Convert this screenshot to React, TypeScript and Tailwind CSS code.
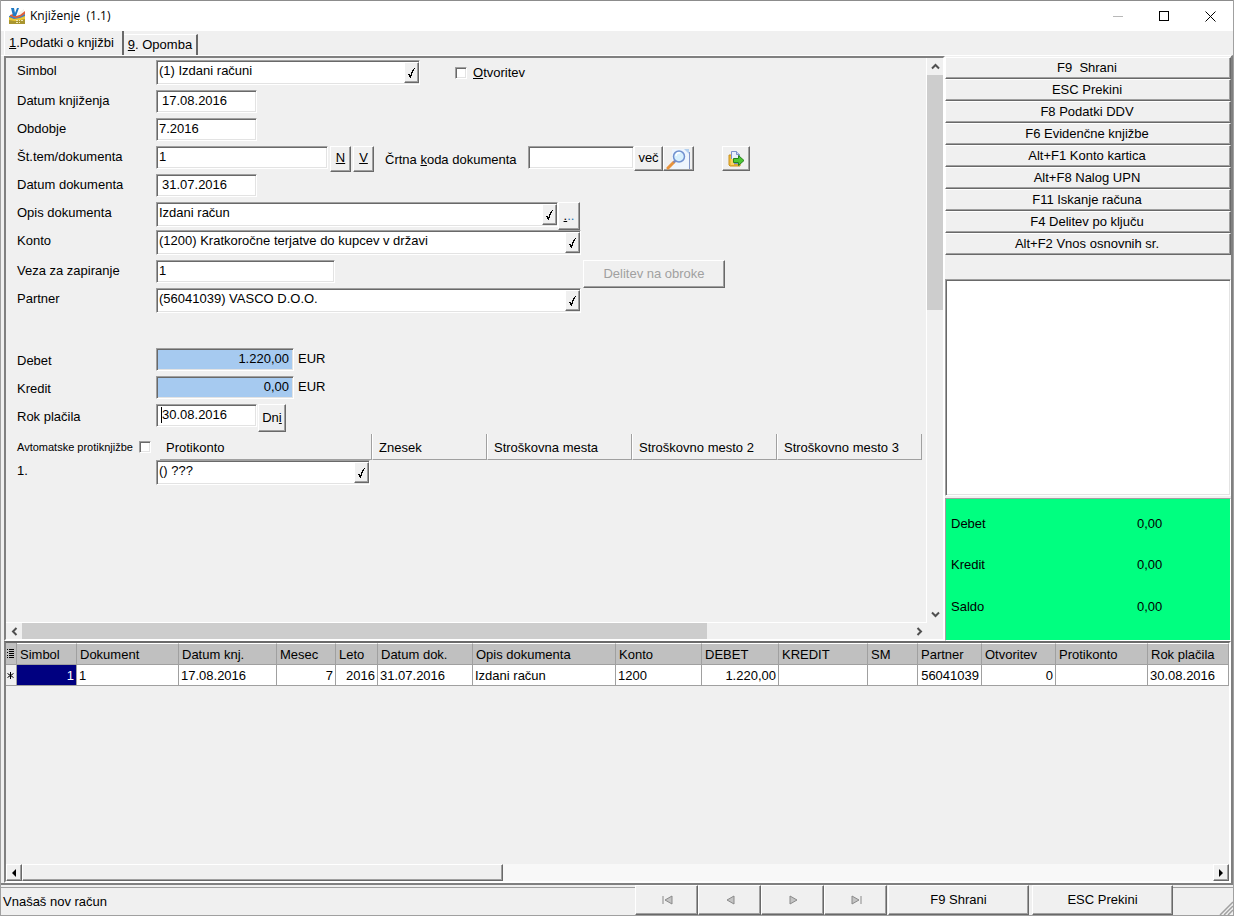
import type { ReactNode } from 'react';
import clsx from 'clsx';

const raised =
	'border border-t-white border-l-white border-r-[#696969] border-b-[#696969] shadow-[inset_-1px_-1px_0_#a0a0a0] bg-[#f0f0f0]';
const sunken =
	'border border-t-[#a0a0a0] border-l-[#a0a0a0] border-r-white border-b-white shadow-[inset_1px_1px_0_#696969,inset_-1px_-1px_0_#e3e3e3] bg-white';

type ButtonProps = {
	children: ReactNode;
	className?: string;
	label?: string;
	disabled?: boolean;
};

const Button = ({ children, className, label, disabled }: ButtonProps) => (
	<button
		type="button"
		aria-label={label}
		disabled={disabled}
		className={clsx(raised, 'flex shrink-0 items-center justify-center', className)}>
		{children}
	</button>
);

const CheckGlyph = () => (
	<svg width="9" height="12" viewBox="0 0 9 12" fill="none" stroke="#000" shapeRendering="crispEdges">
		<path d="M1 7.500h1M2.500 7v3M3.500 8v3M4.500 5v4M5.500 3v3M6.500 2v2M7.500 1v1" />
	</svg>
);

type FieldProps = {
	id: string;
	value: string;
	className?: string;
	indent?: boolean;
};

const Field = ({ id, value, className, indent }: FieldProps) => (
	<input
		id={id}
		defaultValue={value}
		className={clsx(sunken, 'h-[23px] pb-[2px] outline-none', indent ? 'pl-[5px]' : 'pl-[2px]', className)}
	/>
);

// edit box with the lookup button on its right side
const Lookup = ({ id, value, className }: FieldProps) => (
	<div className={clsx(sunken, 'flex h-[25px] shrink-0 py-px pl-px', className)}>
		<input id={id} defaultValue={value} className="min-w-0 flex-1 bg-transparent pb-[3px] pl-px outline-none" />
		<Button label="Izberi" className="w-[15px]">
			<CheckGlyph />
		</Button>
	</div>
);

type RowProps = {
	label: string;
	id: string;
	tall?: boolean;
	low?: boolean;
	children: ReactNode;
};

const Row = ({ label, id, tall, low, children }: RowProps) => (
	<div className={clsx('flex items-start', tall ? 'h-[30px]' : 'h-7')}>
		<label htmlFor={id} className={clsx('w-[139px] shrink-0 leading-[21px]', low && 'pt-[2px]')}>
			{label}
		</label>
		{children}
	</div>
);

const Chevron = ({ d }: { d: string }) => (
	<svg width="9" height="9" viewBox="0 0 9 9" fill="none" stroke="#505050" strokeWidth="2">
		<path d={d} />
	</svg>
);

const Logo = () => (
	<svg width="17" height="16" viewBox="0 0 17 16">
		<path d="M9 5l6-4v6H9z" fill="#f4f4ee" />
		<path d="M0 8l4-1 3 2 4-2 5-1v3l-5 2-5 1-6-2z" fill="#3f7fc0" />
		<path d="M1 7l3-1 3 2 4-1 5-4v3l-5 3-4 1-6-2z" fill="#e0603a" />
		<path d="M0 9l5 2 6-1 5-2v8H0z" fill="#efc832" />
		<path d="M0 12l6 1 10-2v5H0z" fill="#a9952f" />
		<path d="M2 0h3l1 5 2-5h2L7 8H4z" fill="#1f79c4" />
		<path d="M7 12.500h2M10 12.500h1M12 12.500h2M7 14.500h2M10 14.500h1" stroke="#efe6b0" fill="none" />
	</svg>
);

const MagnifierIcon = () => (
	<svg width="26" height="22" viewBox="0 0 26 22">
		<path d="M6 1h13l4 4v16H6z" fill="#eef5fd" />
		<path d="M18 1h5v5z" fill="#b3d0ef" />
		<path d="M23.500 4v17" stroke="#8296c8" />
		<path d="M2 20l6-6" stroke="#e8923a" strokeWidth="3" strokeLinecap="round" />
		<path d="M7.500 14.500l2-2" stroke="#7d86b8" strokeWidth="2" />
		<circle cx="13" cy="8.500" r="5.500" fill="#d8f0fd" stroke="#7191cf" strokeWidth="1.500" />
		<path d="M10 8a3 3 0 0 1 4-3" stroke="#fff" strokeWidth="1.500" fill="none" />
	</svg>
);

const ExportIcon = () => (
	<svg width="17" height="16" viewBox="0 0 17 16">
		<path d="M1 4h3v9h8v2H2l-1-1z" fill="#f2bf3b" stroke="#c8901c" />
		<path d="M3.500.5h5l3 3v9h-8z" fill="#e9effb" stroke="#7e91c9" />
		<path d="M8.500.5v3h3" fill="#c6d4f2" stroke="#7e91c9" />
		<path d="M3 8h3v6H3z" fill="#f7d264" />
		<path d="M5.500 7.500h5v-3l5.500 5-5.500 5v-3h-5z" fill="#4cc832" stroke="#26811c" />
	</svg>
);

const navIcons = [
	{ label: 'Prvi', d: 'M3 3v8M12 3v8l-7-4z' },
	{ label: 'Prejšnji', d: 'M11 3v8l-7-4z' },
	{ label: 'Naslednji', d: 'M4 3v8l7-4z' },
	{ label: 'Zadnji', d: 'M3 3v8l7-4zM12 3v8' },
];

const actions = [
	'F9  Shrani',
	'ESC Prekini',
	'F8 Podatki DDV',
	'F6 Evidenčne knjižbe',
	'Alt+F1 Konto kartica',
	'Alt+F8 Nalog UPN',
	'F11 Iskanje računa',
	'F4 Delitev po ključu',
	'Alt+F2 Vnos osnovnih sr.',
];

const totals = [
	{ name: 'Debet', value: '0,00' },
	{ name: 'Kredit', value: '0,00' },
	{ name: 'Saldo', value: '0,00' },
];

const columns = [
	{ title: 'Simbol', value: '1', width: 'w-[60px]', right: true },
	{ title: 'Dokument', value: '1', width: 'w-[102px]' },
	{ title: 'Datum knj.', value: '17.08.2016', width: 'w-[98px]' },
	{ title: 'Mesec', value: '7', width: 'w-[59px]', right: true },
	{ title: 'Leto', value: '2016', width: 'w-[42px]', right: true },
	{ title: 'Datum dok.', value: '31.07.2016', width: 'w-[95px]' },
	{ title: 'Opis dokumenta', value: 'Izdani račun', width: 'w-[143px]' },
	{ title: 'Konto', value: '1200', width: 'w-[86px]' },
	{ title: 'DEBET', value: '1.220,00', width: 'w-[77px]', right: true },
	{ title: 'KREDIT', value: '', width: 'w-[89px]' },
	{ title: 'SM', value: '', width: 'w-[50px]' },
	{ title: 'Partner', value: '56041039', width: 'w-[64px]', right: true },
	{ title: 'Otvoritev', value: '0', width: 'w-[74px]', right: true },
	{ title: 'Protikonto', value: '', width: 'w-[92px]' },
	{ title: 'Rok plačila', value: '30.08.2016', width: '' },
];

const counterHeads = [
	{ title: 'Znesek', width: 'w-[115px]' },
	{ title: 'Stroškovna mesta', width: 'w-[145px]' },
	{ title: 'Stroškovno mesto 2', width: 'w-[145px]' },
	{ title: 'Stroškovno mesto 3', width: 'w-[145px]' },
];

const headCell = 'flex shrink-0 items-center border-b border-r border-[#a0a0a0] pl-[6px] pt-[3px]';

const TitleBar = () => (
	<header className="flex h-[31px] items-center border-t border-[#8c8c8c] bg-white pl-2">
		<Logo />
		<h1 className="flex-1 whitespace-pre pl-1 font-['Open_Sans',sans-serif] text-[12px]">
			Knjiženje  (1.1)
		</h1>
		<button type="button" aria-label="Pomanjšaj" className="flex w-[46px] justify-center">
			<svg width="10" height="10" stroke="#b8b8b8" shapeRendering="crispEdges">
				<path d="M0 5.500h10" />
			</svg>
		</button>
		<button type="button" aria-label="Povečaj" className="flex w-[46px] justify-center">
			<svg width="10" height="10" fill="none" stroke="#000" shapeRendering="crispEdges">
				<path d="M.5.5h9v9h-9z" />
			</svg>
		</button>
		<button type="button" aria-label="Zapri" className="flex w-[46px] justify-center">
			<svg width="11" height="11" fill="none" stroke="#000">
				<path d="M.5.5l10 10M10.500.5l-10 10" />
			</svg>
		</button>
	</header>
);

const EntryForm = () => (
	<form className="min-w-0 flex-1 overflow-hidden whitespace-nowrap border-b border-r border-white pl-[11px] pt-[2px]">
		<Row label="Simbol" id="simbol" tall>
			<Lookup id="simbol" value="(1) Izdani računi" className="w-[264px]" />
			<div className="flex items-center gap-[6px] pl-[35px] pt-[5px]">
				<input id="otvoritev" type="checkbox" className={clsx(sunken, 'size-3 appearance-none')} />
				<label htmlFor="otvoritev">
					<u>O</u>tvoritev
				</label>
			</div>
		</Row>
		<Row label="Datum knjiženja" id="datumKnj">
			<Field id="datumKnj" value="17.08.2016" className="w-[101px]" indent />
		</Row>
		<Row label="Obdobje" id="obdobje">
			<Field id="obdobje" value="7.2016" className="w-[101px]" />
		</Row>
		<Row label="Št.tem/dokumenta" id="stDok">
			<Field id="stDok" value="1" className="w-[172px]" />
			<Button className="ml-[2px] h-[26px] w-[21px] pb-[2px]">
				<u>N</u>
			</Button>
			<Button className="ml-[2px] h-[26px] w-[21px] pb-[2px]">
				<u>V</u>
			</Button>
			<label htmlFor="koda" className="w-[154px] shrink-0 pl-[11px] leading-7">
				Črtna <u>k</u>oda dokumenta
			</label>
			<Field id="koda" value="" className="w-[106px]" />
			<Button className="h-[25px] w-[29px] pb-[2px]">več</Button>
			<Button label="Poišči" className="h-[25px] w-[31px]">
				<MagnifierIcon />
			</Button>
			<Button label="Odpri" className="ml-7 h-[25px] w-7">
				<ExportIcon />
			</Button>
		</Row>
		<Row label="Datum dokumenta" id="datumDok">
			<Field id="datumDok" value="31.07.2016" className="w-[101px]" indent />
		</Row>
		<Row label="Opis dokumenta" id="opis">
			<Lookup id="opis" value="Izdani račun" className="w-[402px]" />
			<Button label="Več opisov" className="h-7 w-[22px] text-[#1b74b0]">
				<u className="text-black">.</u>..
			</Button>
		</Row>
		<Row label="Konto" id="konto" tall>
			<Lookup id="konto" value="(1200) Kratkoročne terjatve do kupcev v državi" className="w-[425px]" />
		</Row>
		<Row label="Veza za zapiranje" id="veza">
			<Field id="veza" value="1" className="w-[179px]" />
			<Button disabled className="ml-[248px] h-7 w-[142px] pb-px text-[#a0a0a0]">
				Delitev na obroke
			</Button>
		</Row>
		<Row label="Partner" id="partner">
			<Lookup id="partner" value="(56041039) VASCO D.O.O." className="w-[425px]" />
		</Row>
		<div className="pt-8">
			<Row label="Debet" id="debet" low>
				<Field id="debet" value="1.220,00" className="w-[138px] !bg-[#a6caf0] pr-1 text-right" />
				<span className="pl-1 leading-[22px]">EUR</span>
			</Row>
			<Row label="Kredit" id="kredit" low>
				<Field id="kredit" value="0,00" className="w-[138px] !bg-[#a6caf0] pr-1 text-right" />
				<span className="pl-1 leading-[22px]">EUR</span>
			</Row>
			<Row label="Rok plačila" id="rok" low>
				<div className={clsx(sunken, 'flex h-[23px] w-[101px] items-center pb-[2px] pl-1')}>
					<span className="h-4 w-px bg-black" />
					<input id="rok" defaultValue="30.08.2016" className="min-w-0 flex-1 bg-transparent outline-none" />
				</div>
				<Button className="ml-px h-7 w-[28px]">
					<span>
						Dn<u>i</u>
					</span>
				</Button>
			</Row>
		</div>
		<div className="flex h-7 pt-[2px]">
			<div className="flex w-[143px] shrink-0 items-center gap-2 text-[11px]">
				<label htmlFor="avto" className="w-[114px]">
					Avtomatske protiknjižbe
				</label>
				<input id="avto" type="checkbox" className={clsx(sunken, 'size-3 appearance-none')} />
			</div>
			<div className={clsx(headCell, 'w-[212px]')}>Protikonto</div>
			{counterHeads.map((head) => (
				<div key={head.title} className={clsx(headCell, 'border-l border-l-white', head.width)}>
					{head.title}
				</div>
			))}
		</div>
		<Row label="1." id="protikonto">
			<Lookup id="protikonto" value="() ???" className="w-[214px]" />
		</Row>
	</form>
);

const FormPane = () => (
	<section className="flex min-w-0 flex-1 flex-col border-2 border-b-white border-l-[#808080] border-r-white border-t-[#808080]">
		<div className="flex min-h-0 flex-1">
			<EntryForm />
			<div className="flex w-4 flex-col">
				<div className="flex h-[17px] items-center justify-center">
					<Chevron d="M1 6.500l3.500-3.500L8 6.500" />
				</div>
				<div className="h-[235px] bg-[#cdcdcd]" />
				<div className="flex-1" />
				<div className="flex h-[17px] items-center justify-center">
					<Chevron d="M1 2.500L4.500 6 8 2.500" />
				</div>
			</div>
		</div>
		<div className="flex h-4 pr-4">
			<div className="flex w-4 items-center justify-center">
				<Chevron d="M6.500 1L3 4.500 6.500 8" />
			</div>
			<div className="flex flex-1">
				<div className="w-[77%] bg-[#cdcdcd]" />
			</div>
			<div className="flex w-4 items-center justify-center">
				<Chevron d="M2.500 1L6 4.500 2.500 8" />
			</div>
		</div>
	</section>
);

const SidePane = () => (
	<aside className="flex w-[286px] shrink-0 flex-col pt-px">
		<div className="flex flex-col">
			{actions.map((action) => (
				<Button key={action} className="h-[22px] whitespace-pre pr-[2px]">
					{action}
				</Button>
			))}
		</div>
		<textarea aria-label="Sporočila" className={clsx(sunken, 'mt-6 h-[217px] resize-none outline-none')} />
		<dl className="mt-[2px] flex h-[143px] flex-col justify-around border border-b-white border-l-[#a0a0a0] border-r-white border-t-[#a0a0a0] bg-[#00ff80] pb-3 pl-[5px] pt-1">
			{totals.map((total) => (
				<div key={total.name} className="flex">
					<dt className="w-[186px]">{total.name}</dt>
					<dd>{total.value}</dd>
				</div>
			))}
		</dl>
	</aside>
);

const cell = 'overflow-hidden whitespace-nowrap border-b border-r border-[#a0a0a0] px-[2px] font-normal';

const EntriesGrid = () => (
	<section className="flex flex-1 flex-col border-2 border-b-white border-l-[#808080] border-r-white border-t-[#696969]">
		<table className="w-full table-fixed border-separate border-spacing-0">
			<thead>
				<tr className="h-[22px] bg-[#c0c0c0] text-left">
					<th className="w-[11px] border-b border-r border-[#a0a0a0] p-0">
						<svg width="9" height="11" stroke="#000" shapeRendering="crispEdges">
							<path d="M1 1.500h1M1 4.500h1M1 7.500h1M1 9.500h1M3 1.500h5M3 3.500h5M3 5.500h5M3 7.500h5M3 9.500h5" />
						</svg>
					</th>
					{columns.map((col) => (
						<th key={col.title} className={clsx(cell, col.width, 'border-t border-t-white pl-[3px] pt-px')}>
							{col.title}
						</th>
					))}
				</tr>
			</thead>
			<tbody>
				<tr className="h-[21px] bg-white">
					<td className="border-b border-r border-[#a0a0a0] bg-[#f0f0f0] p-0">
						<svg width="7" height="7" className="mx-px" stroke="#000">
							<path d="M3.500 0v7M.5 1.500l6 4M.5 5.500l6-4" />
						</svg>
					</td>
					{columns.map((col, i) => (
						<td
							key={col.title}
							className={clsx(cell, 'pt-px', col.right && 'text-right', i === 0 && 'bg-[#000080] text-white')}>
							{col.value}
						</td>
					))}
				</tr>
			</tbody>
		</table>
		<div className="flex-1" />
		<div className="flex h-[17px] bg-[#f8f8f8]">
			<Button label="Levo" className="w-4">
				<svg width="4" height="8">
					<path d="M4 0v8L0 4z" />
				</svg>
			</Button>
			<div className="flex flex-1">
				<div className={clsx(raised, 'w-[481px]')} />
			</div>
			<Button label="Desno" className="w-4">
				<svg width="4" height="8">
					<path d="M0 0v8l4-4z" />
				</svg>
			</Button>
		</div>
	</section>
);

const StatusBar = () => (
	<footer className="flex h-[31px] items-stretch border-b border-[#a0a0a0]">
		<p className="mt-[2px] flex flex-1 items-center border-t border-[#a0a0a0] pl-[2px]">Vnašaš nov račun</p>
		{navIcons.map((nav) => (
			<Button key={nav.label} label={nav.label} className="w-[63px]">
				<svg width="14" height="14" fill="#c4c4c4" stroke="#8a8a8a">
					<path d={nav.d} />
				</svg>
			</Button>
		))}
		<Button className="ml-px w-[141px]">F9 Shrani</Button>
		<Button className="ml-[3px] w-[141px]">ESC Prekini</Button>
		<div className="mt-[2px] flex w-[60px] items-end justify-end border-t border-[#a0a0a0]">
			<svg width="14" height="14" stroke="#a0a0a0" strokeWidth="1.500">
				<path d="M1 14L14 1M5 14l9-9M9 14l5-5" />
			</svg>
		</div>
	</footer>
);

export default function App() {
	return (
		<div className="flex min-h-screen flex-col border-x border-[#a0a0a0] bg-[#f0f0f0] font-['Liberation_Sans',Arial,sans-serif] text-[13px] leading-[16px] text-black">
			<TitleBar />
			<nav className="flex h-6 items-end pl-[3px]">
				<button type="button" className="h-6 border-l border-r-2 border-l-white border-r-[#696969] pb-px pl-1 pr-2">
					<u>1</u>.Podatki o knjižbi
				</button>
				<button type="button" className="h-[21px] border-r-2 border-t border-r-[#696969] border-t-white px-1">
					<u>9</u>. Opomba
				</button>
			</nav>
			<main className="flex flex-1 flex-col border-r-2 border-t border-r-[#808080] border-t-white pl-[3px]">
				<div className="flex">
					<FormPane />
					<SidePane />
				</div>
				<EntriesGrid />
			</main>
			<div className="border-t-2 border-[#808080]" />
			<StatusBar />
		</div>
	);
}
